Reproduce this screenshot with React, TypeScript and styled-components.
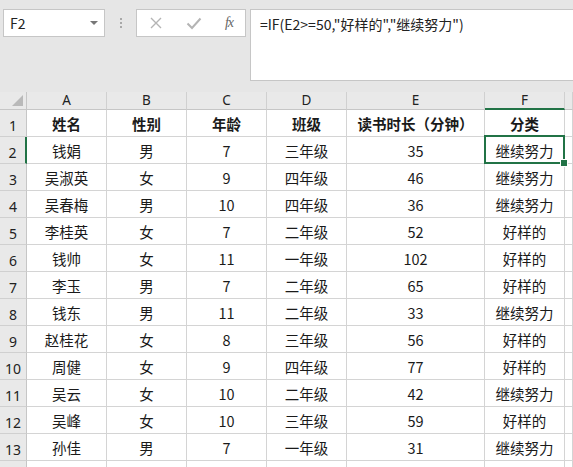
import React from 'react'
import styled, { createGlobalStyle } from 'styled-components'

const GlobalStyle = createGlobalStyle`
  html, body {
    margin: 0;
    padding: 0;
    background: #e6e6e6;
    overflow: hidden;
  }
  body {
    font-family: "Noto Sans CJK SC", "Noto Sans", sans-serif;
    color: #222;
  }
`

const Page = styled.div`
  width: 573px;
  height: 467px;
  overflow: hidden;
  background: #e6e6e6;
  display: flex;
  flex-direction: column;
`

const FormulaBar = styled.div`
  height: 92px;
  flex-shrink: 0;
  box-sizing: border-box;
  padding: 9px 0 0 3px;
  display: flex;
  align-items: flex-start;
`

const NameBox = styled.div`
  width: 102px;
  height: 28px;
  box-sizing: border-box;
  background: #fff;
  border: 1px solid #c6c6c6;
  display: flex;
  align-items: center;
  justify-content: space-between;
  padding: 0 6px 0 6px;
  font-size: 14px;
  color: #222;
`

const Caret = styled.span`
  width: 0;
  height: 0;
  border-left: 4px solid transparent;
  border-right: 4px solid transparent;
  border-top: 4px solid #777;
`

const Dots = styled.div`
  width: 31px;
  height: 28px;
  display: flex;
  flex-direction: column;
  align-items: center;
  justify-content: center;
  gap: 2px;

  span {
    width: 2px;
    height: 2px;
    background: #a8a8a8;
  }
`

const ButtonGroup = styled.div`
  width: 110px;
  height: 28px;
  box-sizing: border-box;
  background: #fff;
  border: 1px solid #c6c6c6;
  display: flex;
  align-items: center;
  justify-content: space-between;
  padding: 0 12px 0 12px;
`

const Fx = styled.span`
  font-family: "Liberation Serif", "DejaVu Serif", serif;
  font-style: italic;
  font-size: 14px;
  color: #666;
  letter-spacing: -1px;
`

const FormulaInput = styled.div`
  margin-left: 4px;
  flex: 1;
  height: 72px;
  box-sizing: border-box;
  background: #fff;
  border: 1px solid #c6c6c6;
  border-right: none;
  padding: 4px 0 0 9px;
  font-size: 14px;
  color: #222;
  white-space: nowrap;
`

const Sheet = styled.div`
  position: relative;
  flex-shrink: 0;
  display: grid;
  grid-template-columns: 27px 80px 80px 80px 80px 138px 80px 1fr;
  grid-auto-rows: 27px;
  grid-template-rows: 18px;
  background: #fff;
`

const Corner = styled.div`
  background: #e9e9e9;
  border-right: 1px solid #c6c6c6;
  border-bottom: 1px solid #c6c6c6;
  box-sizing: border-box;
  position: relative;

  &::after {
    content: '';
    position: absolute;
    right: 3px;
    bottom: 3px;
    width: 0;
    height: 0;
    border-left: 11px solid transparent;
    border-bottom: 11px solid #b9b9b9;
  }
`

const ColHead = styled.div<{ $active?: boolean }>`
  background: #e9e9e9;
  box-sizing: border-box;
  border-right: 1px solid #d0d0d0;
  border-bottom: ${(p) => (p.$active ? '2px solid #217346' : '1px solid #c6c6c6')};
  display: flex;
  align-items: flex-end;
  justify-content: center;
  font-family: "Noto Sans", "Liberation Sans", sans-serif;
  font-size: 13.5px;
  line-height: 16px;
  padding-bottom: ${(p) => (p.$active ? '0px' : '1px')};
  color: #222;
`

const RowHead = styled.div<{ $active?: boolean }>`
  background: #e9e9e9;
  box-sizing: border-box;
  border-right: ${(p) => (p.$active ? '2px solid #217346' : '1px solid #c6c6c6')};
  border-bottom: 1px solid #d0d0d0;
  display: flex;
  align-items: flex-end;
  justify-content: center;
  padding-bottom: 2px;
  font-family: "Noto Sans", "Liberation Sans", sans-serif;
  font-size: 14px;
  line-height: 16px;
  color: #222;
`

const Cell = styled.div<{ $bold?: boolean }>`
  box-sizing: border-box;
  border-right: 1px solid #d4d4d4;
  border-bottom: 1px solid #d4d4d4;
  display: flex;
  align-items: center;
  justify-content: center;
  padding-top: 1px;
  font-size: 14.5px;
  font-weight: ${(p) => (p.$bold ? 700 : 400)};
  color: #1a1a1a;
  white-space: nowrap;
  overflow: hidden;
`

const Selection = styled.div`
  position: absolute;
  left: 484px;
  top: 43px;
  width: 81px;
  height: 29px;
  box-sizing: border-box;
  border: 2px solid #217346;
  pointer-events: none;

  &::after {
    content: '';
    position: absolute;
    right: -5px;
    bottom: -5px;
    width: 6px;
    height: 6px;
    background: #217346;
    border: 1px solid #fff;
  }
`

const columns = ['A', 'B', 'C', 'D', 'E', 'F', '']

const rows: string[][] = [
  ['姓名', '性别', '年龄', '班级', '读书时长（分钟）', '分类'],
  ['钱娟', '男', '7', '三年级', '35', '继续努力'],
  ['吴淑英', '女', '9', '四年级', '46', '继续努力'],
  ['吴春梅', '男', '10', '四年级', '36', '继续努力'],
  ['李桂英', '女', '7', '二年级', '52', '好样的'],
  ['钱帅', '女', '11', '一年级', '102', '好样的'],
  ['李玉', '男', '7', '二年级', '65', '好样的'],
  ['钱东', '男', '11', '二年级', '33', '继续努力'],
  ['赵桂花', '女', '8', '三年级', '56', '好样的'],
  ['周健', '女', '9', '四年级', '77', '好样的'],
  ['吴云', '女', '10', '二年级', '42', '继续努力'],
  ['吴峰', '女', '10', '三年级', '59', '好样的'],
  ['孙佳', '男', '7', '一年级', '31', '继续努力'],
  ['', '', '', '', '', ''],
]

const CrossIcon = () => (
  <svg width="14" height="14" viewBox="0 0 14 14">
    <path d="M2 2 L12 12 M12 2 L2 12" stroke="#b4b4b4" strokeWidth="1.4" fill="none" />
  </svg>
)

const CheckIcon = () => (
  <svg width="16" height="14" viewBox="0 0 16 14">
    <path d="M1.5 7.5 L6 12 L14.5 2.5" stroke="#b4b4b4" strokeWidth="2" fill="none" />
  </svg>
)

export default function App() {
  return (
    <Page>
      <GlobalStyle />
      <FormulaBar>
        <NameBox>
          <span>F2</span>
          <Caret />
        </NameBox>
        <Dots>
          <span />
          <span />
          <span />
        </Dots>
        <ButtonGroup>
          <CrossIcon />
          <CheckIcon />
          <Fx>fx</Fx>
        </ButtonGroup>
        <FormulaInput>=IF(E2&gt;=50,"好样的","继续努力")</FormulaInput>
      </FormulaBar>
      <Sheet>
        <Corner />
        {columns.map((c, i) => (
          <ColHead key={i} $active={c === 'F'}>
            {c}
          </ColHead>
        ))}
        {rows.map((r, i) => (
          <React.Fragment key={i}>
            <RowHead $active={i === 1}>{i + 1}</RowHead>
            {r.map((v, j) => (
              <Cell key={j} $bold={i === 0}>
                {v}
              </Cell>
            ))}
            <Cell />
          </React.Fragment>
        ))}
        <Selection />
      </Sheet>
    </Page>
  )
}
